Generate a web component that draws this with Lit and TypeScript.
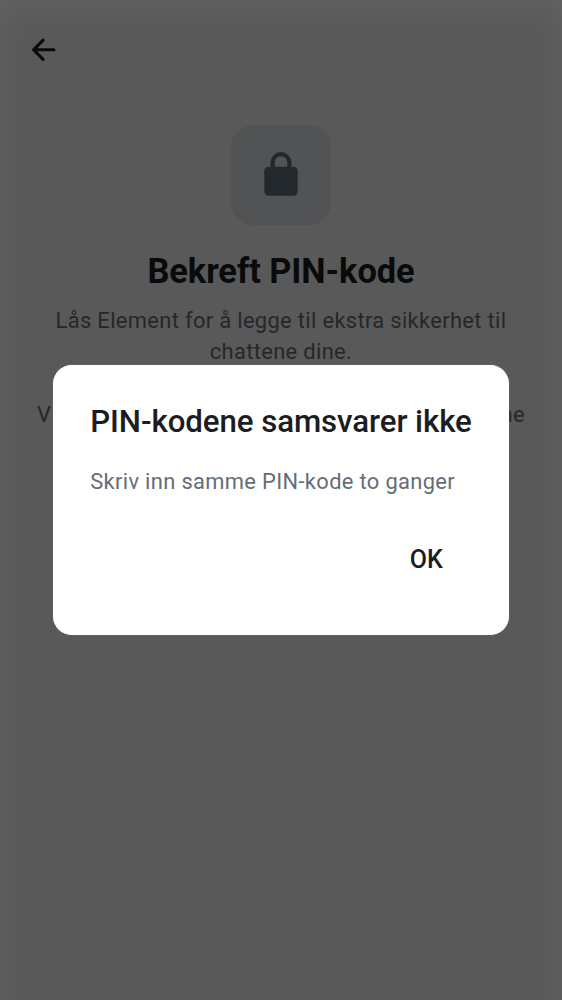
import { LitElement, html, css } from "lit";
import { customElement } from "lit/decorators.js";

@customElement("pin-screen")
class PinScreen extends LitElement {
  static styles = css`
    :host {
      display: flex;
      flex-direction: column;
      height: 1040px;
      font-family: Roboto, sans-serif;
      background: #595959;
      box-shadow: inset 0 4px 32px #646464;
    }
    .bar {
      display: flex;
      align-items: center;
      height: 100px;
      padding-left: 25px;
      box-sizing: border-box;
    }
    .content {
      display: flex;
      flex-direction: column;
      align-items: center;
      padding: 25px 31px 0;
      text-align: center;
    }
    .tile {
      display: grid;
      place-items: center;
      width: 100px;
      height: 100px;
      border-radius: 22px;
      background: #525355;
    }
    svg {
      display: block;
    }
    h1 {
      margin: 24px 0 0;
      font-size: 34.4px;
      line-height: 44px;
      letter-spacing: -0.05px;
      font-weight: 700;
      color: #090a0b;
      white-space: nowrap;
    }
    p {
      margin: 12px 0 0;
      font-size: 21.9px;
      line-height: 31.25px;
      letter-spacing: 0.34px;
      color: #23282b;
      white-space: pre;
    }
    .note {
      display: flex;
      justify-content: space-between;
      width: 488px;
      margin-top: 31.25px;
    }
  `;
  render() {
    return html`
      <div class="bar">
        <svg width="37.5" height="37.5" viewBox="0 0 24 24" fill="none" stroke="#090a0b" stroke-width="2" stroke-linecap="round" stroke-linejoin="round">
          <path d="M18.5 12H5.5M11.6 5.8L5.5 12l6.1 6.2" />
        </svg>
      </div>
      <div class="content">
        <div class="tile">
          <svg width="50" height="50" viewBox="0 0 24 24" fill="#22282b">
            <path fill-rule="evenodd" d="M6 22a2 2 0 0 1-2-2V10a2 2 0 0 1 2-2h1V6a5 5 0 0 1 10 0v2h1a2 2 0 0 1 2 2v10a2 2 0 0 1-2 2ZM9 8h6V6a3 3 0 0 0-6 0Z" />
          </svg>
        </div>
        <h1>Bekreft PIN-kode</h1>
        <p>Lås Element for å legge til ekstra sikkerhet til
chattene dine.</p>
        <p class="note"><span>V</span><span>ne</span></p>
      </div>
    `;
  }
}

@customElement("alert-dialog")
class AlertDialog extends LitElement {
  static styles = css`
    :host {
      display: block;
      box-sizing: border-box;
      width: 456.6px;
      height: 270.4px;
      padding: 37.5px;
      border-radius: 19px;
      background: #fff;
      box-shadow: 0 0 1px rgba(255, 255, 255, 0.6);
      font-family: Roboto, sans-serif;
    }
    h2 {
      margin: 0;
      font-size: 31.25px;
      line-height: 39px;
      letter-spacing: -0.08px;
      font-weight: 500;
      color: #1b1d22;
      white-space: nowrap;
    }
    p {
      margin: 25px 0 0;
      font-size: 21.9px;
      line-height: 31.25px;
      letter-spacing: 0.34px;
      color: #656d77;
      white-space: nowrap;
    }
    .actions {
      display: flex;
      justify-content: flex-end;
      padding: 31px 10px 0 0;
    }
    button {
      border: 0;
      padding: 12px 19px;
      background: none;
      font: 500 25px/38px Roboto, sans-serif;
      color: #1b1d22;
    }
  `;
  render() {
    return html`
      <h2>PIN-kodene samsvarer ikke</h2>
      <p>Skriv inn samme PIN-kode to ganger</p>
      <div class="actions"><button>OK</button></div>
    `;
  }
}

@customElement("app-root")
class AppRoot extends LitElement {
  static styles = css`
    :host {
      display: block;
      position: relative;
      height: 1000px;
      overflow: hidden;
    }
    .overlay {
      position: absolute;
      inset: 0;
      display: grid;
      place-items: center;
    }
  `;
  render() {
    return html`
      <pin-screen></pin-screen>
      <div class="overlay"><alert-dialog role="alertdialog"></alert-dialog></div>
    `;
  }
}
